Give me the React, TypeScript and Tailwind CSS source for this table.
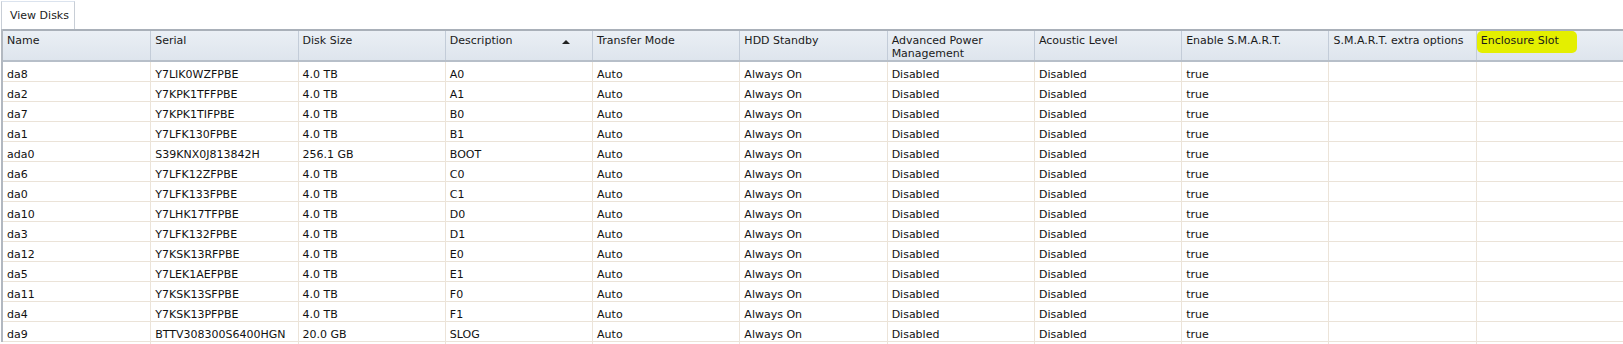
const columns = [
  "Name",
  "Serial",
  "Disk Size",
  "Description",
  "Transfer Mode",
  "HDD Standby",
  "Advanced Power Management",
  "Acoustic Level",
  "Enable S.M.A.R.T.",
  "S.M.A.R.T. extra options",
  "Enclosure Slot",
];

const disks = [
  ["da8", "Y7LIK0WZFPBE", "4.0 TB", "A0"],
  ["da2", "Y7KPK1TFFPBE", "4.0 TB", "A1"],
  ["da7", "Y7KPK1TIFPBE", "4.0 TB", "B0"],
  ["da1", "Y7LFK130FPBE", "4.0 TB", "B1"],
  ["ada0", "S39KNX0J813842H", "256.1 GB", "BOOT"],
  ["da6", "Y7LFK12ZFPBE", "4.0 TB", "C0"],
  ["da0", "Y7LFK133FPBE", "4.0 TB", "C1"],
  ["da10", "Y7LHK17TFPBE", "4.0 TB", "D0"],
  ["da3", "Y7LFK132FPBE", "4.0 TB", "D1"],
  ["da12", "Y7KSK13RFPBE", "4.0 TB", "E0"],
  ["da5", "Y7LEK1AEFPBE", "4.0 TB", "E1"],
  ["da11", "Y7KSK13SFPBE", "4.0 TB", "F0"],
  ["da4", "Y7KSK13PFPBE", "4.0 TB", "F1"],
  ["da9", "BTTV308300S6400HGN", "20.0 GB", "SLOG"],
];

const HeaderCell = function ({ label, idx }: { label: string; idx: number }) {
  return (
    <div
      className={
        "relative px-[4px] pt-[3px] leading-[13px] " +
        (idx > 0 ? "border-l border-[#c3ccd8]" : "")
      }
    >
      {label === "Enclosure Slot" ? (
        <span className="relative">
          <span className="absolute -left-[4px] -top-[3px] h-[22px] w-[100px] rounded-[5px] bg-[#e4ef00]" />
          <span className="relative">{label}</span>
        </span>
      ) : (
        label
      )}
      {label === "Description" && (
        <span className="absolute right-[22px] top-[9px] h-0 w-0 border-x-[4px] border-b-[4px] border-x-transparent border-b-[#222]" />
      )}
    </div>
  );
};

export default function App() {
  return (
    <div className="h-[344px] w-[1623px] overflow-hidden bg-white font-['DejaVu_Sans',Verdana,sans-serif] text-[11px] text-[#111]">
      {/* tab strip */}
      <div className="flex h-[29px] items-end">
        <div className="ml-px flex h-[28px] w-[74px] items-center border-x border-t border-x-[#c8ced6] border-t-[#dbe3ee] bg-white pl-[8px] pt-[2px] text-[#222]">
          View Disks
        </div>
      </div>

      <div className="ml-px border-l-2 border-[#b2b8c0]">
        {/* header */}
        <div className="grid h-[33px] grid-cols-[repeat(11,minmax(0,1fr))] border-y-2 border-t-[#a9b0b9] border-b-[#b7bfc9] bg-gradient-to-b from-[#eaeff5] to-[#dee5ed] text-[#1a1a1a]">
          {columns.map((c, i) => (
            <HeaderCell key={c} label={c} idx={i} />
          ))}
        </div>

        {/* rows */}
        {disks.map((d) => (
          <div
            key={d[0]}
            className="grid h-[20px] grid-cols-[repeat(11,minmax(0,1fr))] border-b border-[#ebe3d8]"
          >
            {[...d, "Auto", "Always On", "Disabled", "Disabled", "true", "", ""].map(
              (v, i) => (
                <div
                  key={i}
                  className={
                    "flex items-center px-[4px] pt-[5px] " +
                    (i > 0 ? "border-l border-[#ece4d9]" : "")
                  }
                >
                  {v}
                </div>
              )
            )}
          </div>
        ))}
      </div>
    </div>
  );
}
